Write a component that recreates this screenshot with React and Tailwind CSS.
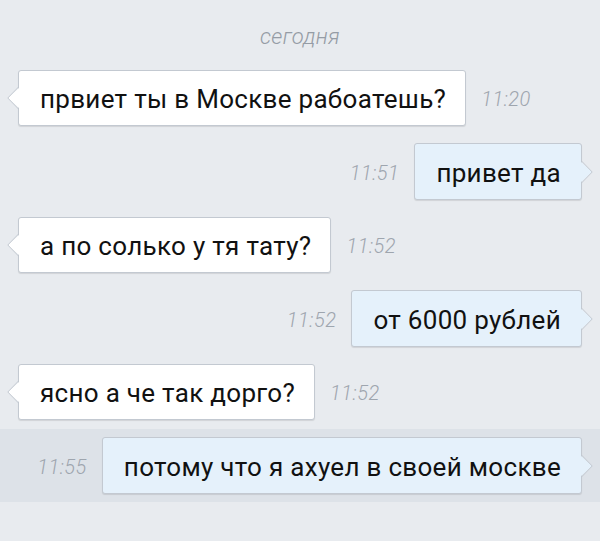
import React from "react";

const font = { fontFamily: "Roboto, 'Noto Sans', sans-serif" };

function Tail({ side, fill }) {
  if (side === "left") {
    return (
      <svg
        className="absolute left-[-12px] top-1/2 -translate-y-1/2"
        width="13"
        height="22"
        viewBox="0 0 13 22"
      >
        <polygon points="13,0 1,11 13,22" fill={fill} />
        <polyline points="11.5,0 0.8,11 11.5,22" fill="none" stroke="#c3c9d1" strokeWidth="1" />
      </svg>
    );
  }
  return (
    <svg
      className="absolute right-[-12px] top-1/2 -translate-y-1/2"
      width="13"
      height="22"
      viewBox="0 0 13 22"
    >
      <polygon points="0,0 12,11 0,22" fill={fill} />
      <polyline points="1.5,0 12.2,11 1.5,22" fill="none" stroke="#c3c9d1" strokeWidth="1" />
    </svg>
  );
}

function Time({ children }) {
  return (
    <span className="text-[20px] italic font-light text-[#9ea5ae] tracking-[0.5px] pt-[2px]" style={font}>
      {children}
    </span>
  );
}

function In({ text, time }) {
  return (
    <div className="flex items-center pl-[18px] gap-[15px]">
      <div className="relative h-[56px] flex items-center pl-[21px] pr-[19px] pt-[3px] bg-white border border-[#c3c9d1] rounded-[3px] shadow-[0_1px_1px_rgba(0,0,0,0.10)]">
        <Tail side="left" fill="#ffffff" />
        <span className="text-[26px] tracking-[0.3px] text-[#111111]" style={font}>{text}</span>
      </div>
      <Time>{time}</Time>
    </div>
  );
}

function Out({ text, time }) {
  return (
    <div className="flex items-center justify-end pr-[18px] gap-[15px]">
      <Time>{time}</Time>
      <div className="relative h-[57px] flex items-center pl-[21px] pr-[20px] pt-[3px] bg-[#e5f1fb] border border-[#c3c9d1] rounded-[3px] shadow-[0_1px_1px_rgba(0,0,0,0.10)]">
        <Tail side="right" fill="#e5f1fb" />
        <span className="text-[26px] tracking-[0.3px] text-[#111111]" style={font}>{text}</span>
      </div>
    </div>
  );
}

export default function App() {
  return (
    <div className="w-[600px] h-[541px] bg-[#e8ebef] overflow-hidden flex flex-col" style={font}>
      <div className="h-[70px] pt-[24px] flex justify-center">
        <span className="text-[22px] italic font-light text-[#959ca5] leading-[26px] tracking-[0.3px]">сегодня</span>
      </div>
      <div className="flex flex-col gap-[17px]">
        <In text="првиет ты в Москве рабоатешь?" time="11:20" />
        <Out text="привет да" time="11:51" />
        <In text="а по солько у тя тату?" time="11:52" />
        <Out text="от 6000 рублей" time="11:52" />
        <In text="ясно а че так дорго?" time="11:52" />
      </div>
      <div className="mt-[9px] bg-[#dde2e8] pt-[8px] pb-[8px]">
        <Out text="потому что я ахуел в своей москве" time="11:55" />
      </div>
    </div>
  );
}
